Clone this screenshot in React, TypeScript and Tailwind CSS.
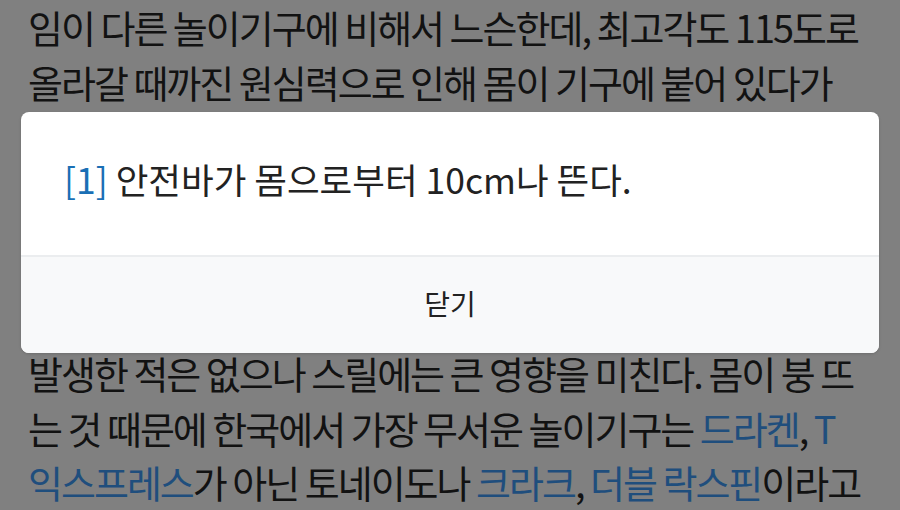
const KR = "font-['Noto_Sans_CJK_KR','Noto_Sans',sans-serif]";

function Link({ children }: { children: React.ReactNode }) {
  return <span className="text-[#1f4e7d]">{children}</span>;
}

function Line({ children }: { children: React.ReactNode }) {
  return (
    <p className="whitespace-nowrap text-[38px] leading-[54.5px] tracking-[-2px] text-[#121212]">
      {children}
    </p>
  );
}

export default function App() {
  return (
    <div className={`relative h-[510px] w-[900px] overflow-hidden bg-[#808080] ${KR}`}>
      {/* article behind the dim */}
      <div className="px-[28px]">
        <Line>임이 다른 놀이기구에 비해서 느슨한데, 최고각도 115도로</Line>
        <Line>올라갈 때까진 원심력으로 인해 몸이 기구에 붙어 있다가</Line>
        <div className="h-[237px]" />
        <Line>발생한 적은 없으나 스릴에는 큰 영향을 미친다. 몸이 붕 뜨</Line>
        <Line>
          는 것 때문에 한국에서 가장 무서운 놀이기구는 <Link>드라켄</Link>, <Link>T</Link>
        </Line>
        <Line>
          <Link>익스프레스</Link>가 아닌 토네이도나 <Link>크라크</Link>, <Link>더블 락스핀</Link>이라고
        </Line>
      </div>

      {/* footnote dialog */}
      <div className="absolute left-[21px] top-[112px] w-[858px] overflow-hidden rounded-[8px] bg-white shadow-[0_1px_3px_rgba(0,0,0,0.15)]">
        <div className="h-[143px] px-[43px] pt-[42px]">
          <p className="whitespace-nowrap text-[35.5px] leading-[50px] text-[#222]">
            <span className="text-[#1a6fb5]">[1]</span> 안전바가 몸으로부터 10cm나 뜬다.
          </p>
        </div>
        <div className="flex h-[98px] items-center justify-center border-t-2 border-[#ebedef] bg-[#f8f9fa] pb-[4px]">
          <span className="text-[28px] text-[#222]">닫기</span>
        </div>
      </div>
    </div>
  );
}
